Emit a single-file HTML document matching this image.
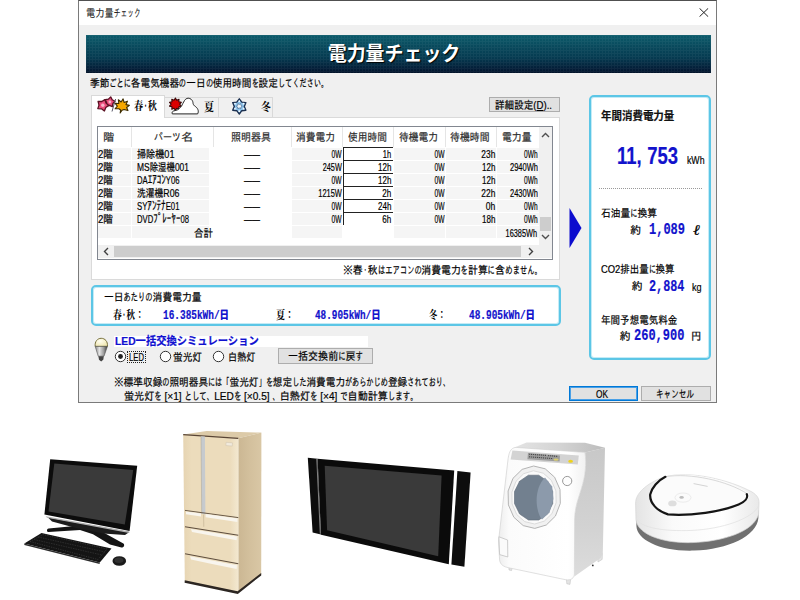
<!DOCTYPE html>
<html lang="ja">
<head>
<meta charset="utf-8">
<title>電力量チェック</title>
<style>
html,body{margin:0;padding:0;}
body{width:800px;height:600px;overflow:hidden;background:#fff;position:relative;
  font-family:"Liberation Sans","IPAGothic","Noto Sans CJK JP",sans-serif;font-size:12px;color:#1a1a1a;}
.a{position:absolute;box-sizing:border-box;}
.t{position:absolute;white-space:nowrap;color:#000;-webkit-text-stroke-width:0.2px;}
.blue{color:#1212cc;font-family:"Liberation Mono","IPAGothic",monospace;font-weight:bold;}
.mincho{font-family:"Liberation Serif","Noto Serif CJK SC",serif;font-weight:bold;-webkit-text-stroke-width:0;}
.hd{color:#2a2a2a;-webkit-text-stroke-width:0.2px;}
#dlg{left:78px;top:0;width:639px;height:403px;background:#f0f0f0;border:1px solid #7a7a7a;border-top-color:#505050;}
#titlebar{left:79px;top:1px;width:637px;height:24px;background:#fff;}
#banner{left:86px;top:35px;width:625px;height:38px;background:linear-gradient(#0c5b6b 0%,#08495c 30%,#053a50 60%,#031c36 90%,#02142a 100%);}
#bannergrid{left:86px;top:35px;width:625px;height:38px;opacity:.045;
  background-image:linear-gradient(90deg,#fff 1px,transparent 1px),linear-gradient(#fff 1px,transparent 1px);background-size:3px 3px;}
.btn{border:1px solid #adadad;background:#e1e1e1;}
.panel{background:#fff;border:2px solid #5cc6e6;border-radius:5px;box-shadow:inset 0 0 0 1px #c4ebf6;}
#tabpanel{left:91px;top:117px;width:469px;height:163px;background:#fff;border:1px solid #dadada;}
.tab{border:1px solid #d9d9d9;border-bottom:none;background:#f0f0f0;}
#lv{left:97px;top:126px;width:456px;height:134px;background:#fff;border:1px solid #828790;}
.cell{background:#f3f3f3;}
.edit{background:#fff;border-top:1px solid #222;border-left:1px solid #222;}
.k{display:inline-block;transform:scaleX(.74);transform-origin:0 50%;}
.p{display:inline-block;transform:scaleX(.5);transform-origin:0 50%;}
.hk{font-size:13px;line-height:11px;}

</style>
</head>
<body>
<div class="a" id="dlg"></div>
<div class="a" id="titlebar"></div>
<svg class="a" style="left:699px;top:8px" width="10" height="9" viewBox="0 0 10 9"><path d="M0.5 0.3 L9.2 8.7 M9.2 0.3 L0.5 8.7" stroke="#222" stroke-width="1" fill="none"/></svg>
<div class="a" id="banner"></div>
<div class="a" id="bannergrid"></div>
<!-- tabs -->
<div class="a" id="tabpanel"></div>
<div class="a tab" style="left:164px;top:97px;width:55px;height:20px;"></div>
<div class="a tab" style="left:218px;top:97px;width:55px;height:20px;"></div>
<div class="a tab" style="left:91px;top:95px;width:74px;height:23px;background:#fff;"></div>
<div class="a btn" style="left:489px;top:97px;width:71px;height:15px;"></div>
<!-- listview -->
<div class="a" id="lv"></div>
<!-- panels -->
<div class="a panel" style="left:91px;top:285px;width:470px;height:41px;"></div>
<div class="a panel" style="left:589px;top:95px;width:122px;height:265px;"></div>
<svg class="a" style="left:569px;top:207px" width="14" height="42" viewBox="0 0 14 42"><path d="M0.5 1 L12.5 21 L0.5 41 Z" fill="#0c0cce"/></svg>
<div class="a" style="left:599px;top:188px;width:103px;height:0;border-top:1px dotted #999;"></div>
<!-- LED area -->
<div class="a" style="left:114px;top:336px;width:254px;height:11px;background:#fff;"></div>
<div class="a btn" style="left:278px;top:348px;width:95px;height:16px;"></div>
<div class="a btn" style="left:569px;top:386px;width:69px;height:15px;border:1px solid #0078d7;box-shadow:inset 0 0 0 1px #4aa0e6;"></div>
<div class="a btn" style="left:641px;top:386px;width:70px;height:15px;"></div>

<div class="a" style="left:131px;top:127px;width:1px;height:20px;background:#e5e5e5;"></div>
<div class="a" style="left:213px;top:127px;width:1px;height:20px;background:#e5e5e5;"></div>
<div class="a" style="left:291px;top:127px;width:1px;height:20px;background:#e5e5e5;"></div>
<div class="a" style="left:342px;top:127px;width:1px;height:20px;background:#e5e5e5;"></div>
<div class="a" style="left:393px;top:127px;width:1px;height:20px;background:#e5e5e5;"></div>
<div class="a" style="left:445px;top:127px;width:1px;height:20px;background:#e5e5e5;"></div>
<div class="a" style="left:496px;top:127px;width:1px;height:20px;background:#e5e5e5;"></div>
<div class="a" style="left:539px;top:127px;width:1px;height:20px;background:#e5e5e5;"></div>
<div class="a" style="left:98px;top:148px;width:33px;height:12px;background:#f5f5f5;"></div>
<div class="a" style="left:132px;top:148px;width:77px;height:12px;background:#f5f5f5;"></div>
<div class="a" style="left:292px;top:148px;width:50px;height:12px;background:#f5f5f5;"></div>
<div class="a" style="left:394px;top:148px;width:51px;height:12px;background:#f5f5f5;"></div>
<div class="a" style="left:446px;top:148px;width:50px;height:12px;background:#f5f5f5;"></div>
<div class="a" style="left:497px;top:148px;width:42px;height:12px;background:#f5f5f5;"></div>
<div class="a edit" style="left:343px;top:147px;width:50px;height:13px;"></div>
<div class="a" style="left:98px;top:161px;width:33px;height:12px;background:#f5f5f5;"></div>
<div class="a" style="left:132px;top:161px;width:77px;height:12px;background:#f5f5f5;"></div>
<div class="a" style="left:292px;top:161px;width:50px;height:12px;background:#f5f5f5;"></div>
<div class="a" style="left:394px;top:161px;width:51px;height:12px;background:#f5f5f5;"></div>
<div class="a" style="left:446px;top:161px;width:50px;height:12px;background:#f5f5f5;"></div>
<div class="a" style="left:497px;top:161px;width:42px;height:12px;background:#f5f5f5;"></div>
<div class="a edit" style="left:343px;top:160px;width:50px;height:13px;"></div>
<div class="a" style="left:98px;top:174px;width:33px;height:12px;background:#f5f5f5;"></div>
<div class="a" style="left:132px;top:174px;width:77px;height:12px;background:#f5f5f5;"></div>
<div class="a" style="left:292px;top:174px;width:50px;height:12px;background:#f5f5f5;"></div>
<div class="a" style="left:394px;top:174px;width:51px;height:12px;background:#f5f5f5;"></div>
<div class="a" style="left:446px;top:174px;width:50px;height:12px;background:#f5f5f5;"></div>
<div class="a" style="left:497px;top:174px;width:42px;height:12px;background:#f5f5f5;"></div>
<div class="a edit" style="left:343px;top:173px;width:50px;height:13px;"></div>
<div class="a" style="left:98px;top:187px;width:33px;height:12px;background:#f5f5f5;"></div>
<div class="a" style="left:132px;top:187px;width:77px;height:12px;background:#f5f5f5;"></div>
<div class="a" style="left:292px;top:187px;width:50px;height:12px;background:#f5f5f5;"></div>
<div class="a" style="left:394px;top:187px;width:51px;height:12px;background:#f5f5f5;"></div>
<div class="a" style="left:446px;top:187px;width:50px;height:12px;background:#f5f5f5;"></div>
<div class="a" style="left:497px;top:187px;width:42px;height:12px;background:#f5f5f5;"></div>
<div class="a edit" style="left:343px;top:186px;width:50px;height:13px;"></div>
<div class="a" style="left:98px;top:200px;width:33px;height:12px;background:#f5f5f5;"></div>
<div class="a" style="left:132px;top:200px;width:77px;height:12px;background:#f5f5f5;"></div>
<div class="a" style="left:292px;top:200px;width:50px;height:12px;background:#f5f5f5;"></div>
<div class="a" style="left:394px;top:200px;width:51px;height:12px;background:#f5f5f5;"></div>
<div class="a" style="left:446px;top:200px;width:50px;height:12px;background:#f5f5f5;"></div>
<div class="a" style="left:497px;top:200px;width:42px;height:12px;background:#f5f5f5;"></div>
<div class="a edit" style="left:343px;top:199px;width:50px;height:13px;"></div>
<div class="a" style="left:98px;top:213px;width:33px;height:12px;background:#f5f5f5;"></div>
<div class="a" style="left:132px;top:213px;width:77px;height:12px;background:#f5f5f5;"></div>
<div class="a" style="left:292px;top:213px;width:50px;height:12px;background:#f5f5f5;"></div>
<div class="a" style="left:394px;top:213px;width:51px;height:12px;background:#f5f5f5;"></div>
<div class="a" style="left:446px;top:213px;width:50px;height:12px;background:#f5f5f5;"></div>
<div class="a" style="left:497px;top:213px;width:42px;height:12px;background:#f5f5f5;"></div>
<div class="a edit" style="left:343px;top:212px;width:50px;height:13px;"></div>
<div class="a" style="left:98px;top:226px;width:33px;height:12px;background:#f5f5f5;"></div>
<div class="a" style="left:132px;top:226px;width:77px;height:12px;background:#f5f5f5;"></div>
<div class="a" style="left:292px;top:226px;width:50px;height:12px;background:#f5f5f5;"></div>
<div class="a" style="left:394px;top:226px;width:51px;height:12px;background:#f5f5f5;"></div>
<div class="a" style="left:446px;top:226px;width:50px;height:12px;background:#f5f5f5;"></div>
<div class="a" style="left:497px;top:226px;width:42px;height:12px;background:#f5f5f5;"></div>
<div class="a" style="left:539px;top:127px;width:13px;height:118px;background:#f0f0f0;"></div>
<div class="a" style="left:540px;top:217px;width:11px;height:14px;background:#cdcdcd;"></div>
<svg class="a" style="left:541px;top:132px" width="9" height="6" viewBox="0 0 9 6"><path d="M1 5 L4.5 1.5 L8 5" stroke="#505050" stroke-width="1.4" fill="none"/></svg>
<svg class="a" style="left:541px;top:234px" width="9" height="6" viewBox="0 0 9 6"><path d="M1 1 L4.5 4.5 L8 1" stroke="#505050" stroke-width="1.4" fill="none"/></svg>
<div class="a" style="left:98px;top:245px;width:441px;height:13px;background:#f0f0f0;"></div>
<div class="a" style="left:114px;top:246px;width:407px;height:11px;background:#cdcdcd;"></div>
<div class="a" style="left:539px;top:245px;width:13px;height:13px;background:#f0f0f0;"></div>
<svg class="a" style="left:103px;top:247px" width="6" height="9" viewBox="0 0 6 9"><path d="M5 1 L1.5 4.5 L5 8" stroke="#404040" stroke-width="1.4" fill="none"/></svg>
<svg class="a" style="left:528px;top:247px" width="6" height="9" viewBox="0 0 6 9"><path d="M1 1 L4.5 4.5 L1 8" stroke="#404040" stroke-width="1.4" fill="none"/></svg>
<svg class="a" style="left:90px;top:94px" width="190" height="24" viewBox="90 94 190 24"><polygon points="110.7,96.9 112.2,99.7 115.0,101.2 112.9,103.5 112.3,106.6 109.4,105.3 106.2,105.7 106.6,102.5 105.3,99.7 108.4,99.1" fill="#ea4c7c" stroke="#5a1022" stroke-width="1.3" stroke-linejoin="round"/><polygon points="104.9,99.6 106.0,103.1 108.8,105.4 105.8,107.5 104.4,111.0 101.5,108.8 97.8,108.6 99.0,105.1 98.1,101.5 101.8,101.5" fill="#ea4c7c" stroke="#5a1022" stroke-width="1.3" stroke-linejoin="round"/><circle cx="102.8" cy="105.2" r="1.7" fill="#f6b4c8"/><circle cx="109.9" cy="102" r="1.4" fill="#f6b4c8"/><path d="M115.6 99 L112 111.5" stroke="#556" stroke-width="1"/><polygon points="122,98.8 123.5,102.2 126.6,100.4 125.7,104 129.2,104.2 126.8,106.7 128.6,109.6 124.6,109.2 122.7,110.2 121.3,113.2 121.3,110.2 119.4,109.2 115.6,109.8 117.4,106.8 114.9,104.4 118.5,104 117.4,100.4 120.5,102.2" fill="#f6a800" stroke="#3c2c00" stroke-width="1.1" stroke-linejoin="round" transform="rotate(9 122 106)"/><polygon points="175.4,98.0 176.7,100.2 179.0,99.2 178.8,101.7 181.3,102.3 179.6,104.2 181.3,106.1 178.8,106.7 179.0,109.2 176.7,108.2 175.4,110.4 174.1,108.2 171.8,109.2 172.0,106.7 169.5,106.1 171.2,104.2 169.5,102.3 172.0,101.7 171.8,99.2 174.1,100.2" fill="#dc0000" stroke="#3a0808" stroke-width="1.1" stroke-linejoin="round"/><path d="M172.3 113.9 L197.6 113.9 C198.4 112.6 198.5 111 197.9 109.6 C197.3 108 196.4 107.4 195.4 106.5 C194 105.6 193.4 104.8 193.1 103.6 C192.9 101.8 192.6 100.8 191.8 100 C190.8 98.8 189.6 98.2 188.2 98.2 C186.6 98.3 185.4 99.2 184.6 100.4 C183.8 101.6 183.4 102.6 182.8 103.6 C182 105.4 181.4 106.4 180.6 107.2 C179.6 108.4 178.6 109.2 177.4 109.9 C175.8 110.5 174.4 110.6 173.3 111.1 C172.2 111.7 171.8 112.8 172.3 113.9 Z" fill="#fff" stroke="#222" stroke-width="1" stroke-linejoin="round"/><polygon points="239.3,98.8 241.8,102.1 245.9,102.6 244.3,106.4 245.9,110.2 241.8,110.7 239.3,114.0 236.8,110.7 232.7,110.2 234.3,106.4 232.7,102.6 236.8,102.1" fill="#90c6ee" stroke="#1c3050" stroke-width="1.4" stroke-linejoin="round"/><polygon points="240.8,103.6 240.9,105.3 242.3,106.2 240.9,107.1 240.8,108.8 239.3,108.0 237.8,108.8 237.7,107.1 236.3,106.2 237.7,105.3 237.8,103.6 239.3,104.4" fill="#eef7fd" stroke="#3a5a82" stroke-width="0.6"/><circle cx="239.3" cy="101.2" r="0.85" fill="#f4fbff"/><circle cx="243.6" cy="103.7" r="0.85" fill="#f4fbff"/><circle cx="243.6" cy="108.7" r="0.85" fill="#f4fbff"/><circle cx="239.3" cy="111.2" r="0.85" fill="#f4fbff"/><circle cx="235.0" cy="108.7" r="0.85" fill="#f4fbff"/><circle cx="235.0" cy="103.7" r="0.85" fill="#f4fbff"/></svg>
<svg class="a" style="left:113.9px;top:349.5px" width="13" height="13" viewBox="0 0 13 13"><circle cx="6.5" cy="6.5" r="5.2" fill="#fff" stroke="#333" stroke-width="1"/><circle cx="6.5" cy="6.5" r="2.4" fill="#222"/></svg>
<svg class="a" style="left:159.1px;top:349.5px" width="13" height="13" viewBox="0 0 13 13"><circle cx="6.5" cy="6.5" r="5.2" fill="#fff" stroke="#333" stroke-width="1"/></svg>
<svg class="a" style="left:212.3px;top:349.5px" width="13" height="13" viewBox="0 0 13 13"><circle cx="6.5" cy="6.5" r="5.2" fill="#fff" stroke="#333" stroke-width="1"/></svg>
<div class="a" style="left:127px;top:351px;width:19px;height:12px;border:1px dotted #222;"></div>
<svg class="a" style="left:93px;top:337px" width="17" height="26" viewBox="93 337 17 26">
<defs><linearGradient id="hs" x1="0" x2="1" y1="0" y2="0"><stop offset="0" stop-color="#8a8a8a"/><stop offset=".35" stop-color="#e4e4e4"/><stop offset=".7" stop-color="#9a9a9a"/><stop offset="1" stop-color="#3a3a3a"/></linearGradient>
<radialGradient id="gl" cx=".4" cy=".35" r=".7"><stop offset="0" stop-color="#fffef0"/><stop offset="1" stop-color="#efe6b0"/></radialGradient></defs>
<path d="M95.2 346.4 C94.6 341.5 97.5 338.3 101.2 338.3 C105 338.3 108 341.5 107.4 346.4 Z" fill="url(#gl)" stroke="#77703c" stroke-width="1"/>
<path d="M95.2 346.4 L107.4 346.4 L104 356.2 L98.2 356.2 Z" fill="url(#hs)" stroke="#555" stroke-width=".6"/>
<path d="M98.4 356.2 L103.8 356.2 L103.4 359.6 L101.2 361.6 L99 359.8 Z" fill="#444"/>
</svg>
<div class="t" style="left:86px;transform-origin:0 50%;top:6.7px;font-size:11px;line-height:13px;transform:scaleX(0.838);color:#222;-webkit-text-stroke-width:0.1px;">電力量<span class="k" style="margin-right:-11.4px">チェック</span></div>
<div class="t nonarrow" style="left:193.7px;width:400px;text-align:center;transform-origin:50% 50%;top:42.7px;font-size:20px;line-height:22px;transform:scaleX(0.946);color:#fff;font-weight:bold;font-family:'Liberation Sans','Noto Sans CJK JP',sans-serif;text-shadow:1px 1px 1px #000;-webkit-text-stroke-width:0;"><span>電力量チェック</span></div>
<div class="t" style="left:90px;transform-origin:0 50%;top:77.2px;font-size:11px;line-height:13px;transform:scaleX(0.879);">季節<span class="k" style="margin-right:-8.6px">ごとに</span>各電気機器<span class="k" style="margin-right:-2.9px">の</span>一日<span class="k" style="margin-right:-2.9px">の</span>使用時間<span class="k" style="margin-right:-2.9px">を</span>設定<span class="k" style="margin-right:-20.0px">してください。</span></div>
<div class="t mincho" style="left:133.6px;transform-origin:0 50%;top:100.4px;font-size:11px;line-height:13px;transform:scaleX(0.836);">春<span class="p" style="margin-right:-5.5px">・</span>秋</div>
<div class="t mincho" style="left:204px;transform-origin:0 50%;top:101.2px;font-size:11px;line-height:13px;transform:scaleX(0.909);">夏</div>
<div class="t mincho" style="left:260.8px;transform-origin:0 50%;top:101.2px;font-size:11px;line-height:13px;transform:scaleX(0.909);">冬</div>
<div class="t" style="left:495px;transform-origin:0 50%;top:98.5px;font-size:11px;line-height:13px;transform:scaleX(0.871);">詳細設定(<u>D</u>)..</div>
<div class="t hd" style="left:103.3px;transform-origin:0 50%;top:131.2px;font-size:11px;line-height:13px;transform:scaleX(1.000);">階</div>
<div class="t hd" style="left:153.75px;transform-origin:0 50%;top:131.2px;font-size:11px;line-height:13px;transform:scaleX(1.102);"><span class="k" style="margin-right:-8.6px">パーツ</span>名</div>
<div class="t hd" style="left:231px;transform-origin:0 50%;top:131.2px;font-size:11px;line-height:13px;transform:scaleX(0.909);">照明器具</div>
<div class="t hd" style="left:296px;transform-origin:0 50%;top:131.2px;font-size:11px;line-height:13px;transform:scaleX(0.886);">消費電力</div>
<div class="t hd" style="left:347.6px;transform-origin:0 50%;top:131.2px;font-size:11px;line-height:13px;transform:scaleX(0.886);">使用時間</div>
<div class="t hd" style="left:399px;transform-origin:0 50%;top:131.2px;font-size:11px;line-height:13px;transform:scaleX(0.886);">待機電力</div>
<div class="t hd" style="left:450px;transform-origin:0 50%;top:131.2px;font-size:11px;line-height:13px;transform:scaleX(0.898);">待機時間</div>
<div class="t hd" style="left:502px;transform-origin:0 50%;top:131.2px;font-size:11px;line-height:13px;transform:scaleX(0.894);">電力量</div>
<div class="t" style="left:98px;transform-origin:0 50%;top:148.2px;font-size:11px;line-height:13px;transform:scaleX(0.876);">2階</div>
<div class="t" style="left:137px;transform-origin:0 50%;top:148.2px;font-size:11px;line-height:13px;transform:scaleX(0.829);">掃除機01</div>
<div class="t" style="left:244px;transform-origin:0 50%;top:148.2px;font-size:11px;line-height:13px;transform:scaleX(0.727);">――</div>
<div class="t" style="right:458.5px;transform-origin:100% 50%;top:148.2px;font-size:11px;line-height:13px;transform:scaleX(0.606);">0W</div>
<div class="t" style="right:408.5px;transform-origin:100% 50%;top:148.2px;font-size:11px;line-height:13px;transform:scaleX(0.686);">1h</div>
<div class="t" style="right:356px;transform-origin:100% 50%;top:148.2px;font-size:11px;line-height:13px;transform:scaleX(0.606);">0W</div>
<div class="t" style="right:305px;transform-origin:100% 50%;top:148.2px;font-size:11px;line-height:13px;transform:scaleX(0.763);">23h</div>
<div class="t" style="right:262.5px;transform-origin:100% 50%;top:148.2px;font-size:11px;line-height:13px;transform:scaleX(0.601);">0Wh</div>
<div class="t" style="left:98px;transform-origin:0 50%;top:161.2px;font-size:11px;line-height:13px;transform:scaleX(0.876);">2階</div>
<div class="t" style="left:137px;transform-origin:0 50%;top:161.2px;font-size:11px;line-height:13px;transform:scaleX(0.766);">MS除湿機001</div>
<div class="t" style="left:244px;transform-origin:0 50%;top:161.2px;font-size:11px;line-height:13px;transform:scaleX(0.727);">――</div>
<div class="t" style="right:458.5px;transform-origin:100% 50%;top:161.2px;font-size:11px;line-height:13px;transform:scaleX(0.661);">245W</div>
<div class="t" style="right:408.5px;transform-origin:100% 50%;top:161.2px;font-size:11px;line-height:13px;transform:scaleX(0.730);">12h</div>
<div class="t" style="right:356px;transform-origin:100% 50%;top:161.2px;font-size:11px;line-height:13px;transform:scaleX(0.606);">0W</div>
<div class="t" style="right:305px;transform-origin:100% 50%;top:161.2px;font-size:11px;line-height:13px;transform:scaleX(0.730);">12h</div>
<div class="t" style="right:262.5px;transform-origin:100% 50%;top:161.2px;font-size:11px;line-height:13px;transform:scaleX(0.683);">2940Wh</div>
<div class="t" style="left:98px;transform-origin:0 50%;top:174.2px;font-size:11px;line-height:13px;transform:scaleX(0.876);">2階</div>
<div class="t" style="left:137px;transform-origin:0 50%;top:174.2px;font-size:11px;line-height:13px;transform:scaleX(0.698);">DA<span class="hk">ｴｱｺﾝ</span>Y06</div>
<div class="t" style="left:244px;transform-origin:0 50%;top:174.2px;font-size:11px;line-height:13px;transform:scaleX(0.727);">――</div>
<div class="t" style="right:458.5px;transform-origin:100% 50%;top:174.2px;font-size:11px;line-height:13px;transform:scaleX(0.606);">0W</div>
<div class="t" style="right:408.5px;transform-origin:100% 50%;top:174.2px;font-size:11px;line-height:13px;transform:scaleX(0.730);">12h</div>
<div class="t" style="right:356px;transform-origin:100% 50%;top:174.2px;font-size:11px;line-height:13px;transform:scaleX(0.606);">0W</div>
<div class="t" style="right:305px;transform-origin:100% 50%;top:174.2px;font-size:11px;line-height:13px;transform:scaleX(0.730);">12h</div>
<div class="t" style="right:262.5px;transform-origin:100% 50%;top:174.2px;font-size:11px;line-height:13px;transform:scaleX(0.601);">0Wh</div>
<div class="t" style="left:98px;transform-origin:0 50%;top:187.2px;font-size:11px;line-height:13px;transform:scaleX(0.876);">2階</div>
<div class="t" style="left:137px;transform-origin:0 50%;top:187.2px;font-size:11px;line-height:13px;transform:scaleX(0.799);">洗濯機R06</div>
<div class="t" style="left:244px;transform-origin:0 50%;top:187.2px;font-size:11px;line-height:13px;transform:scaleX(0.727);">――</div>
<div class="t" style="right:458.5px;transform-origin:100% 50%;top:187.2px;font-size:11px;line-height:13px;transform:scaleX(0.677);">1215W</div>
<div class="t" style="right:408.5px;transform-origin:100% 50%;top:187.2px;font-size:11px;line-height:13px;transform:scaleX(0.735);">2h</div>
<div class="t" style="right:356px;transform-origin:100% 50%;top:187.2px;font-size:11px;line-height:13px;transform:scaleX(0.606);">0W</div>
<div class="t" style="right:305px;transform-origin:100% 50%;top:187.2px;font-size:11px;line-height:13px;transform:scaleX(0.763);">22h</div>
<div class="t" style="right:262.5px;transform-origin:100% 50%;top:187.2px;font-size:11px;line-height:13px;transform:scaleX(0.683);">2430Wh</div>
<div class="t" style="left:98px;transform-origin:0 50%;top:200.2px;font-size:11px;line-height:13px;transform:scaleX(0.876);">2階</div>
<div class="t" style="left:137px;transform-origin:0 50%;top:200.2px;font-size:11px;line-height:13px;transform:scaleX(0.705);">SY<span class="hk">ｱﾝﾃﾅ</span>E01</div>
<div class="t" style="left:244px;transform-origin:0 50%;top:200.2px;font-size:11px;line-height:13px;transform:scaleX(0.727);">――</div>
<div class="t" style="right:458.5px;transform-origin:100% 50%;top:200.2px;font-size:11px;line-height:13px;transform:scaleX(0.606);">0W</div>
<div class="t" style="right:408.5px;transform-origin:100% 50%;top:200.2px;font-size:11px;line-height:13px;transform:scaleX(0.730);">24h</div>
<div class="t" style="right:356px;transform-origin:100% 50%;top:200.2px;font-size:11px;line-height:13px;transform:scaleX(0.606);">0W</div>
<div class="t" style="right:305px;transform-origin:100% 50%;top:200.2px;font-size:11px;line-height:13px;transform:scaleX(0.776);">0h</div>
<div class="t" style="right:262.5px;transform-origin:100% 50%;top:200.2px;font-size:11px;line-height:13px;transform:scaleX(0.601);">0Wh</div>
<div class="t" style="left:98px;transform-origin:0 50%;top:213.2px;font-size:11px;line-height:13px;transform:scaleX(0.876);">2階</div>
<div class="t" style="left:137px;transform-origin:0 50%;top:213.2px;font-size:11px;line-height:13px;transform:scaleX(0.698);">DVD<span class="hk">ﾌﾟﾚｰﾔｰ</span>08</div>
<div class="t" style="left:244px;transform-origin:0 50%;top:213.2px;font-size:11px;line-height:13px;transform:scaleX(0.727);">――</div>
<div class="t" style="right:458.5px;transform-origin:100% 50%;top:213.2px;font-size:11px;line-height:13px;transform:scaleX(0.606);">0W</div>
<div class="t" style="right:408.5px;transform-origin:100% 50%;top:213.2px;font-size:11px;line-height:13px;transform:scaleX(0.735);">6h</div>
<div class="t" style="right:356px;transform-origin:100% 50%;top:213.2px;font-size:11px;line-height:13px;transform:scaleX(0.606);">0W</div>
<div class="t" style="right:305px;transform-origin:100% 50%;top:213.2px;font-size:11px;line-height:13px;transform:scaleX(0.730);">18h</div>
<div class="t" style="right:262.5px;transform-origin:100% 50%;top:213.2px;font-size:11px;line-height:13px;transform:scaleX(0.601);">0Wh</div>
<div class="t" style="right:587.5px;transform-origin:100% 50%;top:226.7px;font-size:11px;line-height:13px;transform:scaleX(0.864);">合計</div>
<div class="t" style="right:262.5px;transform-origin:100% 50%;top:226.7px;font-size:11px;line-height:13px;transform:scaleX(0.669);">16385Wh</div>
<div class="t" style="left:342.7px;transform-origin:0 50%;top:263.7px;font-size:11px;line-height:13px;transform:scaleX(0.897);">※春<span class="p" style="margin-right:-5.5px">・</span>秋<span class="k" style="margin-right:-17.2px">はエアコンの</span>消費電力<span class="k" style="margin-right:-2.9px">を</span>計算<span class="k" style="margin-right:-2.9px">に</span>含<span class="k" style="margin-right:-14.3px">めません。</span></div>
<div class="t" style="left:103.75px;transform-origin:0 50%;top:290.9px;font-size:11px;line-height:13px;transform:scaleX(0.890);">一日<span class="k" style="margin-right:-11.4px">あたりの</span>消費電力量</div>
<div class="t mincho" style="left:112.5px;transform-origin:0 50%;top:309.2px;font-size:11px;line-height:13px;transform:scaleX(0.805);">春<span class="p" style="margin-right:-5.5px">・</span>秋：</div>
<div class="t blue" style="left:162.5px;transform-origin:0 50%;top:308.7px;font-size:12px;line-height:14px;transform:scaleX(0.786);">16.385kWh/日</div>
<div class="t mincho" style="left:276px;transform-origin:0 50%;top:309.2px;font-size:11px;line-height:13px;transform:scaleX(0.818);">夏：</div>
<div class="t blue" style="left:315px;transform-origin:0 50%;top:308.7px;font-size:12px;line-height:14px;transform:scaleX(0.780);">48.905kWh/日</div>
<div class="t mincho" style="left:429px;transform-origin:0 50%;top:309.2px;font-size:11px;line-height:13px;transform:scaleX(0.773);">冬：</div>
<div class="t blue" style="left:468.5px;transform-origin:0 50%;top:308.7px;font-size:12px;line-height:14px;transform:scaleX(0.786);">48.905kWh/日</div>
<div class="t nonarrow" style="left:115px;transform-origin:0 50%;top:334.9px;font-size:11px;line-height:13px;transform:scaleX(0.936);color:#1010d0;font-weight:bold;font-family:'Liberation Sans','Noto Sans CJK JP',sans-serif;">LED一括交換シミュレーション</div>
<div class="t" style="left:128.5px;transform-origin:0 50%;top:350.5px;font-size:11px;line-height:13px;transform:scaleX(0.701);">LED</div>
<div class="t" style="left:173px;transform-origin:0 50%;top:350.5px;font-size:11px;line-height:13px;transform:scaleX(0.879);">蛍光灯</div>
<div class="t" style="left:227.5px;transform-origin:0 50%;top:350.5px;font-size:11px;line-height:13px;transform:scaleX(0.833);">白熱灯</div>
<div class="t" style="left:287.5px;transform-origin:0 50%;top:350.0px;font-size:11px;line-height:13px;transform:scaleX(0.912);">一括交換前<span class="k" style="margin-right:-2.9px">に</span>戻<span class="k" style="margin-right:-2.9px">す</span></div>
<div class="t" style="left:113.75px;transform-origin:0 50%;top:375.9px;font-size:11px;line-height:13px;transform:scaleX(0.878);">※標準収録<span class="k" style="margin-right:-2.9px">の</span>照明器具<span class="k" style="margin-right:-8.6px">には「</span>蛍光灯<span class="k" style="margin-right:-5.7px">」を</span>想定<span class="k" style="margin-right:-5.7px">した</span>消費電力<span class="k" style="margin-right:-17.2px">があらかじめ</span>登録<span class="k" style="margin-right:-17.2px">されており、</span></div>
<div class="t" style="left:123.75px;transform-origin:0 50%;top:389.7px;font-size:11px;line-height:13px;transform:scaleX(0.916);">蛍光灯<span class="k" style="margin-right:-2.9px">を</span> [×1] <span class="k" style="margin-right:-11.4px">として、</span>LED<span class="k" style="margin-right:-2.9px">を</span> [×0.5] <span class="k" style="margin-right:-2.9px">、</span>白熱灯<span class="k" style="margin-right:-2.9px">を</span> [×4] <span class="k" style="margin-right:-2.9px">で</span>自動計算<span class="k" style="margin-right:-11.4px">します。</span></div>
<div class="t" style="left:600.7px;transform-origin:0 50%;top:109.7px;font-size:11px;line-height:13px;transform:scaleX(0.952);font-weight:bold;font-family:'Liberation Sans','Noto Sans CJK JP',sans-serif;color:#111;">年間消費電力量</div>
<div class="t blue" style="left:617.3px;transform-origin:0 50%;top:144.1px;font-size:23px;line-height:25px;transform:scaleX(0.803);font-family:'Liberation Sans',sans-serif;">11<span style="letter-spacing:.3em">,</span>753</div>
<div class="t" style="left:686.5px;transform-origin:0 50%;top:154.2px;font-size:11px;line-height:13px;transform:scaleX(0.795);">kWh</div>
<div class="t" style="left:600.7px;transform-origin:0 50%;top:207.0px;font-size:11px;line-height:13px;transform:scaleX(0.887);">石油量<span class="k" style="margin-right:-2.9px">に</span>換算</div>
<div class="t" style="left:630px;transform-origin:0 50%;top:223.5px;font-size:11px;line-height:13px;transform:scaleX(1.000);">約</div>
<div class="t blue" style="left:648.7px;transform-origin:0 50%;top:220.7px;font-size:16px;line-height:18px;transform:scaleX(0.750);">1,089</div>
<div class="t" style="left:693px;transform-origin:0 50%;top:221.7px;font-size:15px;line-height:17px;transform:scaleX(1.120);font-family:'Liberation Serif','Noto Sans CJK JP',serif;font-style:italic;">ℓ</div>
<div class="t" style="left:601px;transform-origin:0 50%;top:262.6px;font-size:11px;line-height:13px;transform:scaleX(0.856);">CO2排出量<span class="k" style="margin-right:-2.9px">に</span>換算</div>
<div class="t" style="left:631.5px;transform-origin:0 50%;top:280.2px;font-size:11px;line-height:13px;transform:scaleX(1.000);">約</div>
<div class="t blue" style="left:648.6px;transform-origin:0 50%;top:277.7px;font-size:16px;line-height:18px;transform:scaleX(0.737);">2,884</div>
<div class="t" style="left:692.4px;transform-origin:0 50%;top:281.2px;font-size:11px;line-height:13px;transform:scaleX(0.826);">kg</div>
<div class="t" style="left:601px;transform-origin:0 50%;top:313.6px;font-size:11px;line-height:13px;transform:scaleX(0.868);">年間予想電気料金</div>
<div class="t" style="left:619.5px;transform-origin:0 50%;top:329.5px;font-size:11px;line-height:13px;transform:scaleX(1.000);">約</div>
<div class="t blue" style="left:633.6px;transform-origin:0 50%;top:326.7px;font-size:16px;line-height:18px;transform:scaleX(0.750);">260,900</div>
<div class="t" style="left:690.6px;transform-origin:0 50%;top:329.5px;font-size:11px;line-height:13px;transform:scaleX(0.945);">円</div>
<div class="t" style="left:596.4px;transform-origin:0 50%;top:387.5px;font-size:11px;line-height:13px;transform:scaleX(0.754);">OK</div>
<div class="t" style="left:655.5px;transform-origin:0 50%;top:387.5px;font-size:11px;line-height:13px;transform:scaleX(0.934);"><span class="k" style="margin-right:-14.3px">キャンセル</span></div>
<svg class="a" style="left:0;top:404px" width="800" height="196" viewBox="0 404 800 196">
<defs>
<linearGradient id="fr1" x1="0" x2="1" y1="0" y2="0"><stop offset="0" stop-color="#eadbbf"/><stop offset="1" stop-color="#f0e2c8"/></linearGradient>
<linearGradient id="wm1" x1="0" x2="1" y1="0" y2="0"><stop offset="0" stop-color="#f4f4f4"/><stop offset=".5" stop-color="#ffffff"/><stop offset="1" stop-color="#f0f0f0"/></linearGradient>
<linearGradient id="gls" x1="0" x2="1" y1="0" y2="0"><stop offset="0" stop-color="#7c8a98"/><stop offset=".55" stop-color="#8896a4"/><stop offset=".56" stop-color="#aab6c2"/><stop offset="1" stop-color="#b8c2cc"/></linearGradient>
</defs>
<!-- ===== PC ===== -->
<g id="pc">
<!-- stand -->
<path d="M48.6 528.4 L80 525.6 L98 529.6 L123.4 543.4 C125 545 124 547.6 121.4 547.4 L110 544.6 L93 534.2 L80 530 L48.6 532 C46.4 531.8 46.4 528.8 48.6 528.4 Z" fill="#141414"/>
<!-- under body -->
<path d="M48 517.6 L129.4 532 L125 535 L103 533.4 L76 528 L52 521.6 Z" fill="#1c1c1c"/>
<!-- bezel -->
<path d="M50.2 459.2 L137.2 465.7 L129.6 531 L44.4 514.6 Z" fill="#0c0c0c"/>
<!-- silver trim -->
<path d="M45.6 516.2 L129.4 531.6 L129.1 532.9 L47 517.8 Z" fill="#b0b0b0"/>
<!-- screen -->
<path d="M54.3 463.5 L133.2 470 L124.8 524.6 L48.5 511.5 Z" fill="#3a3a3a"/>
<!-- keyboard -->
<path d="M24.3 543.4 L41.5 532.9 L111.5 548.5 L99.8 562.5 Z" fill="#141414"/>
<path d="M24.3 543.4 L99.8 562.5 L99.6 564 L24.3 545 Z" fill="#2c2c2c"/>
<path d="M30 541.5 L43 534.5 L107 549 L98 559.5 Z" fill="none" stroke="#3a3a3a" stroke-width="0.8" stroke-dasharray="1.2 1.2"/>
<path d="M34 539.5 L102 555 M38 537 L105 552" stroke="#333" stroke-width="0.8" stroke-dasharray="1.5 1"/>
<!-- mouse -->
<ellipse cx="119.3" cy="561" rx="6.8" ry="4.8" fill="#1a1a1a"/>
<ellipse cx="118.9" cy="560.2" rx="4.4" ry="2.7" fill="#303030"/>
</g>
<!-- ===== FRIDGE ===== -->
<g id="fridge">
<defs>
<linearGradient id="fside" x1="0" x2="1" y1="0" y2="0"><stop offset="0" stop-color="#cbb793"/><stop offset=".5" stop-color="#d3c09d"/><stop offset="1" stop-color="#d9c7a5"/></linearGradient>
<linearGradient id="ffront" x1="0" x2="1" y1="0" y2="0"><stop offset="0" stop-color="#e6d4b2"/><stop offset=".15" stop-color="#ecdcbc"/><stop offset=".85" stop-color="#ecdcbc"/><stop offset="1" stop-color="#f3e8d0"/></linearGradient>
</defs>
<!-- top -->
<path d="M183.2 434.6 L206.7 431 L261.4 432.6 L238.3 438.2 Z" fill="#dccaa8"/>
<!-- side -->
<path d="M238.3 438.2 L261.4 432.6 L261.2 574.6 L238.3 592.4 Z" fill="url(#fside)"/>
<!-- front -->
<path d="M183.2 434.6 L238.3 438.2 L238.3 592.4 L184.8 581.4 Z" fill="url(#ffront)"/>
<path d="M183.2 434.6 L238.3 438.4" stroke="#584434" stroke-width="1.3"/>
<!-- base -->
<path d="M184.8 580.2 L237.6 591.2 L261.2 573 L261.2 575.4 L237.8 594 L184.6 582.8 Z" fill="#2c2622"/>
<!-- door split -->
<path d="M201 436.2 L204.9 436.5 L205.4 514.4 L201.7 513.8 Z" fill="#c6cace"/>
<path d="M201 436.2 L201.7 513.8" stroke="#a9a598" stroke-width=".5"/>
<!-- gap lines -->
<path d="M185 510.4 L238.3 517.6" stroke="#6a5a48" stroke-width="1"/>
<path d="M185 526.8 L238.3 535.2" stroke="#5e4e3e" stroke-width="1.1"/>
<path d="M185 553.8 L238.3 563.8" stroke="#5e4e3e" stroke-width="1.1"/>
<!-- handles (white bands) -->
<path d="M186 511.4 L201 513.4 L201 516.4 L186 514.2 Z M205.6 514 L237.4 518.4 L237.4 522 L205.6 517.2 Z" fill="#f8f5ee"/>
<path d="M191 529 L237 536.6 L236.6 540.2 L212 535.8 L192 532 Z" fill="#f8f5ee"/>
<path d="M190 556.2 L237 565.2 L236.6 569 L212 564 L191 559.4 Z" fill="#f8f5ee"/>
<path d="M203.6 514.6 L203.8 526.8" stroke="#c9b999" stroke-width=".8"/>
<rect x="226" y="442.6" width="6.4" height="3.2" fill="#f1eadc" stroke="#c8bca8" stroke-width=".4" transform="rotate(5 229 444)"/>
</g>
<!-- ===== TV ===== -->
<g id="tv">
<path d="M307.8 457.8 L317.6 458.8 L321 534.6 L312.6 532.6 Z" fill="#0d0d0d"/>
<path d="M317.6 458.8 L454.2 470.6 L448.8 564.2 L321 534.8 Z" fill="#0b0b0b"/>
<path d="M316.8 458.9 L320.3 533.8" stroke="#b8b8b8" stroke-width=".7"/>
<path d="M324.7 465.7 L441.6 475.6 L438.2 556.2 L327.1 530.3 Z" fill="#3a3a3a"/>
<path d="M457.4 471 L470.6 472.6 L464.4 566.8 L451.4 564.6 Z" fill="#0d0d0d"/>
</g>
<!-- ===== WASHER ===== -->
<g id="washer">
<defs>
<linearGradient id="wside" x1="0" x2="0" y1="0" y2="1"><stop offset="0" stop-color="#c8c8c8"/><stop offset=".6" stop-color="#d2d2d2"/><stop offset="1" stop-color="#dcdcdc"/></linearGradient>
<linearGradient id="wtop" x1="0" x2="1" y1="0" y2="0"><stop offset="0" stop-color="#e4e4e4"/><stop offset=".5" stop-color="#d4d4d4"/><stop offset="1" stop-color="#bcbcbc"/></linearGradient>
<linearGradient id="wfront" x1="0" x2="1" y1="0" y2="0"><stop offset="0" stop-color="#ededed"/><stop offset=".12" stop-color="#fbfbfb"/><stop offset=".8" stop-color="#ffffff"/><stop offset="1" stop-color="#f1f1f1"/></linearGradient>
</defs>
<!-- feet -->
<path d="M508.8 566 L512.2 567 L511.6 570.6 L509 570 Z M566.4 579 L570.6 579.4 L570 584.4 L566.8 583.8 Z M597.6 557 L602.4 553.6 L602.2 559.4 L598 562 Z" fill="#e4e4e4" stroke="#bdbdbd" stroke-width=".5"/>
<!-- side -->
<path d="M585 452.4 L605 447.8 L602.8 553.6 L600.6 558 L574.4 576.6 L574.6 520 C575 506 578.4 499 581.6 488 C585.4 476 586.6 464 585 452.4 Z" fill="url(#wside)"/>
<!-- top -->
<path d="M513.8 447.7 L526.5 442.6 L585 442.8 L605 447.8 L585 452.6 Z" fill="url(#wtop)"/>
<!-- front -->
<path d="M516 447.4 L585 452.4 C586.6 464 585.4 476 581.6 488 C578.4 499 575 506 574.6 520 L574.4 574 C574.2 578 571 580.6 566 579.8 L508.8 567.8 C503.5 566.6 500.4 565 499.6 560 L498.5 541 L507.8 461.2 C508.6 453 510.5 447.6 516 447.4 Z" fill="url(#wfront)" stroke="#d2d2d2" stroke-width=".7"/>
<!-- control panel -->
<path d="M512.4 450.6 L578.8 455.6 L577.8 464.4 L510.6 459.6 Z" fill="#d3d3d3"/>
<path d="M528 453 L560 455.4 L559.6 461.6 L527.4 459.2 Z" fill="#9c9c9c"/>
<path d="M529 454.2 L546 455.4 M529 456.8 L553 458.6 M548 455.6 L558 456.4" stroke="#4a4a4a" stroke-width="1.1" stroke-dasharray="1.2 .8"/>
<ellipse cx="570.6" cy="461.2" rx="2.4" ry="1.5" fill="#eed21c"/>
<ellipse cx="556" cy="459.6" rx="2.6" ry="1.2" fill="#d8cc70"/>
<!-- door -->
<polygon points="560.3,503.4 555.4,516.1 546.3,525.0 534.8,528.4 523.2,525.6 513.8,517.2 508.4,504.9 508.1,491.0 513.0,478.3 522.1,469.4 533.6,466.0 545.2,468.8 554.6,477.2 560.0,489.5" fill="#f1f1f1" stroke="#b4b4b4" stroke-width="1"/>
<polygon points="556.1,502.7 552.0,513.5 544.3,521.1 534.6,524.0 524.7,521.6 516.7,514.5 512.1,503.9 511.9,492.1 516.0,481.3 523.7,473.7 533.4,470.8 543.3,473.2 551.3,480.3 555.9,490.9" fill="#fafafa" stroke="#d0d0d0" stroke-width=".7"/>
<polygon points="552.7,503.6 547.6,514.0 538.8,520.0 528.5,520.0 519.6,514.0 514.5,503.6 514.5,491.6 519.6,481.2 528.4,475.2 538.7,475.2 547.6,481.2 552.7,491.6" fill="#72808f" stroke="#5c6876" stroke-width=".6"/>
<path d="M545 477.4 C538 484 535.6 496 537 506 C538 513 540 517.6 542 519.4 L549.6 512.2 L553.4 499 L552.2 486.4 Z" fill="#8c9aab"/>
<!-- button -->
<circle cx="567.2" cy="481" r="4.6" fill="#fdfdfd" stroke="#9a9a9a" stroke-width="1"/>
<!-- small panel -->
<path d="M498.9 536.8 L507.6 540 L507.8 557 L499.6 554.6 Z" fill="#fafafa" stroke="#c2c2c2" stroke-width=".8"/>
<circle cx="592.8" cy="565.4" r="0.9" fill="#333"/>
</g>
<!-- ===== ROBOT ===== -->
<g id="robot">
<defs>
<linearGradient id="rband" x1="0" x2="1" y1="0" y2="0"><stop offset="0" stop-color="#e4e4e4"/><stop offset=".3" stop-color="#fafafa"/><stop offset=".7" stop-color="#ffffff"/><stop offset="1" stop-color="#e9e9e9"/></linearGradient>
</defs>
<!-- gray bottom band -->
<path d="M636.4 526 C637 540 660 551.6 694 550.6 C728 549.6 757 536 758.4 518 L758.4 510 C750 530 720 541 692 542 C664 543 640 534 636.4 519 Z" fill="#707070"/>
<!-- white side band -->
<path d="M635.6 503 C635.6 494 645 484 664 477 C690 470 730 480 752 492 C757.6 495.4 759.2 499 759 503 L758.6 514 C754 532 722 541.6 692 542.6 C664 543.4 638 535 636 520 Z" fill="url(#rband)" stroke="#d6d6d6" stroke-width=".7"/>
<path d="M636.2 518 C640 528 664 531.6 692 530.4 C722 529 752 519 758.6 506" fill="none" stroke="#e2e2e2" stroke-width=".8"/>
<!-- top surface -->
<path d="M665 476.8 C690 470.6 728 480 748 492.6 C752 496 748 501 738 505 C716 513 686 516.4 668 514.6 C655 510 646 500 651.6 490.6 C655 484.6 660 479.4 665 476.8 Z" fill="#fbfbfb"/>
<path d="M665 476.8 C690 472.4 728 481 747.6 494" fill="none" stroke="#cfcfcf" stroke-width=".8"/>
<path d="M665.4 476.8 C658 480.4 651.6 488 650.2 494.6 C649.6 503 657 511 668 514.4 C690 516.2 722 511.6 738.6 504.6 C744.6 502 748.4 498 746.8 494.2" fill="none" stroke="#151515" stroke-width="2.2" stroke-linecap="round"/>
<ellipse cx="672.4" cy="503.4" rx="4.2" ry="2.9" fill="#dedede"/>
<ellipse cx="683" cy="497.6" rx="8" ry="4.6" fill="none" stroke="#ececec" stroke-width="1"/>
<ellipse cx="681.6" cy="497.4" rx="2.2" ry="1.4" fill="#bdbdbd"/>
<path d="M693.6 483.6 L707.6 486.4" stroke="#d4d4d4" stroke-width="1"/>
</g>
</svg>

</body>
</html>
